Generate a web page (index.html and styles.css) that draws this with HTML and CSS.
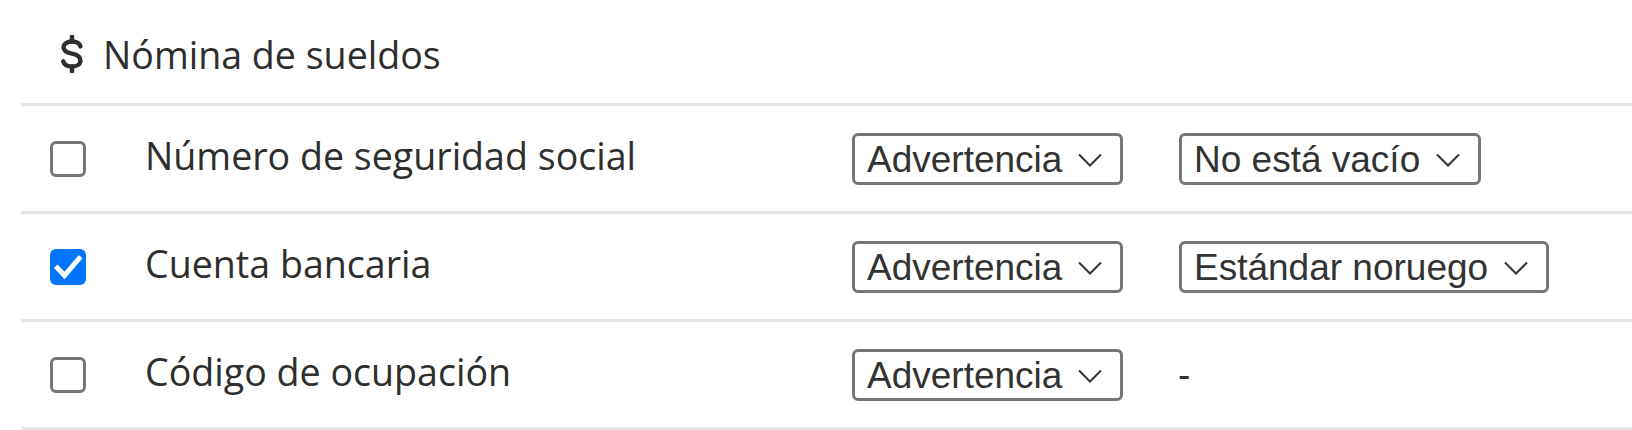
FILE: index.html
```html
<!DOCTYPE html>
<html lang="es">
<head>
<meta charset="utf-8">
<title>Nómina de sueldos</title>
<link rel="stylesheet" href="styles.css">
</head>
<body>
<section class="panel">
  <header class="panel-head">
    <svg class="dollar" viewBox="0 0 24 38" width="24" height="38" aria-hidden="true">
      <path d="M12 1.5 V6.5 M12 31.5 V36.5" stroke="#2e2e2e" stroke-width="4.4" stroke-linecap="round" fill="none"/>
      <path d="M20.4 11.4 C19.5 8.2 16.5 6.5 12 6.5 C6.7 6.5 3.6 9 3.6 12.4 C3.6 16.2 7 17.5 12 18.6 C17.2 19.7 20.4 21.2 20.4 25.4 C20.4 29.1 17.2 31.5 12 31.5 C7.4 31.5 4.2 29.6 3.2 26.3" stroke="#2e2e2e" stroke-width="4.4" stroke-linecap="round" fill="none"/>
    </svg>
    <h2 class="panel-title">Nómina de sueldos</h2>
  </header>

  <div class="row">
    <span class="check"></span>
    <span class="label">Número de seguridad social</span>
    <div class="cell"><div class="select"><span>Advertencia</span><svg class="chev" viewBox="0 0 24 14" width="24" height="14"><polyline points="1,1.5 12,12.5 23,1.5"/></svg></div></div>
    <div class="cell"><div class="select"><span>No está vacío</span><svg class="chev" viewBox="0 0 24 14" width="24" height="14"><polyline points="1,1.5 12,12.5 23,1.5"/></svg></div></div>
  </div>

  <div class="row">
    <span class="check checked"><svg viewBox="0 0 36 36" width="36" height="36"><polyline points="7.5,19 14.5,26.5 29,9.5"/></svg></span>
    <span class="label">Cuenta bancaria</span>
    <div class="cell"><div class="select"><span>Advertencia</span><svg class="chev" viewBox="0 0 24 14" width="24" height="14"><polyline points="1,1.5 12,12.5 23,1.5"/></svg></div></div>
    <div class="cell"><div class="select"><span>Estándar noruego</span><svg class="chev" viewBox="0 0 24 14" width="24" height="14"><polyline points="1,1.5 12,12.5 23,1.5"/></svg></div></div>
  </div>

  <div class="row">
    <span class="check"></span>
    <span class="label">Código de ocupación</span>
    <div class="cell"><div class="select"><span>Advertencia</span><svg class="chev" viewBox="0 0 24 14" width="24" height="14"><polyline points="1,1.5 12,12.5 23,1.5"/></svg></div></div>
    <div class="cell"><span class="dash">-</span></div>
  </div>
</section>
</body>
</html>
```

FILE: styles.css
```css
html, body {
  margin: 0;
  padding: 0;
  background: #ffffff;
}

body {
  font-family: "Open Sans", "Liberation Sans", sans-serif;
  color: #2e2e2e;
}

.panel {
  margin-left: 21px;
}

.panel-head {
  display: flex;
  align-items: center;
  height: 106px;
  box-sizing: border-box;
  padding: 6px 0 0 39px;
  border-bottom: 3px solid #e5e5e5;
}

.dollar {
  display: block;
  flex: none;
  margin-right: 19px;
  margin-top: -1px;
}

.panel-title {
  margin: 0;
  font-size: 37.6px;
  font-weight: 400;
  line-height: 50px;
  color: #2e2e2e;
}

.row {
  display: grid;
  grid-template-columns: 95px 707px 327px 1fr;
  align-items: center;
  height: 108px;
  box-sizing: border-box;
  padding-left: 29px;
  padding-top: 1px;
  border-bottom: 3px solid #e5e5e5;
}

.check {
  display: block;
  width: 36px;
  height: 36px;
  box-sizing: border-box;
  border: 3px solid #767676;
  border-radius: 6px;
  background: #ffffff;
}

.check.checked {
  border: none;
  background: #0075ff;
}

.check.checked svg {
  display: block;
}

.check.checked polyline {
  fill: none;
  stroke: #ffffff;
  stroke-width: 5;
  stroke-linecap: square;
  stroke-linejoin: miter;
}

.label {
  font-size: 37.6px;
  line-height: 50px;
  color: #2e2e2e;
  margin-top: -6px;
}

.cell {
  display: flex;
  align-items: center;
}

.select {
  display: inline-flex;
  align-items: center;
  height: 52px;
  box-sizing: border-box;
  border: 3px solid #767676;
  border-radius: 6px;
  padding: 0 18px 0 12px;
  font-family: "Liberation Sans", Arial, sans-serif;
  font-size: 37px;
  line-height: 42px;
  color: #333333;
  background: #ffffff;
}

.select span {
  display: block;
  padding-top: 2px;
}

.chev {
  display: block;
  flex: none;
  margin-left: 15.5px;
  margin-top: 1px;
}

.chev polyline {
  fill: none;
  stroke: #333333;
  stroke-width: 2;
}

.dash {
  font-family: "Liberation Sans", Arial, sans-serif;
  font-size: 37px;
  line-height: 42px;
  color: #333333;
  margin-left: -1px;
}
```
